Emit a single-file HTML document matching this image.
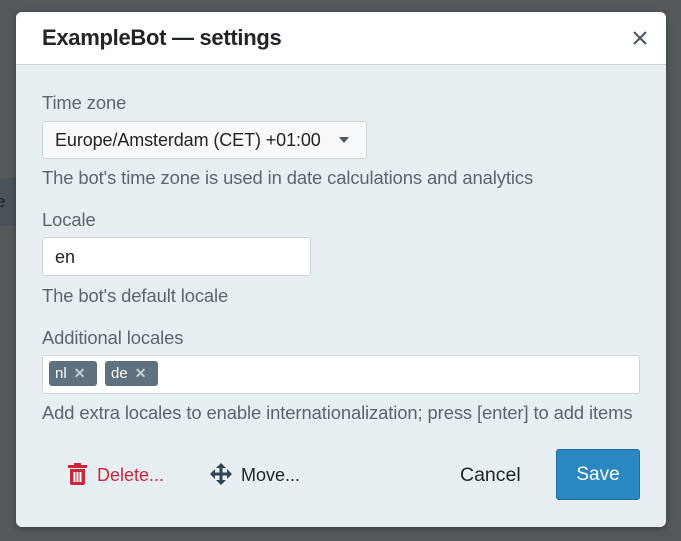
<!DOCTYPE html>
<html><head><meta charset="utf-8"><style>
*{box-sizing:border-box;margin:0;padding:0}
body{width:681px;height:541px;background:#55595c;font-family:"Liberation Sans",sans-serif;position:relative;overflow:hidden}
.strip{position:absolute;left:0;top:178px;width:30px;height:48px;background:#4a5359}
.strip span{position:absolute;left:-4px;top:14px;color:#222;font-size:17px}
.modal{position:absolute;left:16px;top:12px;width:650px;height:515px;background:#e8eff2;border-radius:6px;overflow:hidden;box-shadow:0 2px 8px rgba(0,0,0,.3)}
.hd{height:53px;background:#fff;border-bottom:1px solid #cfd6da;position:relative}
.hd h1{position:absolute;left:26px;top:13px;font-size:22px;font-weight:bold;color:#212529;letter-spacing:-0.3px}
.a{position:absolute;color:#5d656b;font-size:18.4px;white-space:nowrap;letter-spacing:-0.1px}
.box{position:absolute;background:#fff;border:1px solid #ced4d8;border-radius:3px}
.tag{position:absolute;top:5px;height:25px;background:#5f707e;color:#fff;border-radius:3px;font-size:15px;padding:4px 0 0 6px}
.tag b{color:#c5ced5;margin-left:7px;font-weight:bold;font-size:14px}
.btn{position:absolute;font-size:18px;color:#212529}
.save{position:absolute;left:540px;top:437px;width:84px;height:51px;background:#2a87c2;border:1px solid #1c6fa3;border-radius:3px;color:#fff;font-size:19px;text-align:center;line-height:49px}
</style></head><body>
<div class="strip"><span>e</span></div>
<div class="modal">
 <div class="hd"><h1>ExampleBot — settings</h1>
 <svg style="position:absolute;left:617px;top:19px" width="14" height="14" viewBox="0 0 14 14"><path d="M1 1L13 13M13 1L1 13" stroke="#4b5a66" stroke-width="2.2"/></svg></div>
 <div class="a" style="left:26px;top:80px">Time zone</div>
 <div class="box" style="left:26px;top:109px;width:325px;height:38px;background:#f8f9fa">
  <span style="position:absolute;left:12px;top:8px;font-size:18px;color:#212529;letter-spacing:-0.1px">Europe/Amsterdam (CET) +01:00</span>
  <span style="position:absolute;left:296px;top:15px;width:0;height:0;border-left:5px solid transparent;border-right:5px solid transparent;border-top:6px solid #4b5a66"></span>
 </div>
 <div class="a" style="left:26px;top:155px">The bot's time zone is used in date calculations and analytics</div>
 <div class="a" style="left:26px;top:197px">Locale</div>
 <div class="box" style="left:26px;top:225px;width:269px;height:39px"><span style="position:absolute;left:12px;top:9px;font-size:18px;color:#212529">en</span></div>
 <div class="a" style="left:26px;top:273px">The bot's default locale</div>
 <div class="a" style="left:26px;top:315px">Additional locales</div>
 <div class="box" style="left:26px;top:343px;width:598px;height:39px">
  <div class="tag" style="left:6px;width:48px">nl<b>✕</b></div>
  <div class="tag" style="left:62px;width:53px">de<b>✕</b></div>
 </div>
 <div class="a" style="left:26px;top:390px">Add extra locales to enable internationalization; press [enter] to add items</div>
 <svg style="position:absolute;left:52px;top:451px" width="19" height="22" viewBox="0 0 19 22"><rect x="0" y="2" width="19" height="3" fill="#c8283a"/><rect x="6" y="0" width="7" height="3" fill="#c8283a"/><path d="M2 6h15v14a2 2 0 0 1-2 2H4a2 2 0 0 1-2-2z" fill="#c8283a"/><rect x="5.5" y="9" width="2" height="10" fill="#fff"/><rect x="8.5" y="9" width="2" height="10" fill="#fff"/><rect x="11.5" y="9" width="2" height="10" fill="#fff"/></svg>
 <div class="btn" style="left:81px;top:453px;color:#c8283a">Delete...</div>
 <svg style="position:absolute;left:194px;top:451px" width="22" height="22" viewBox="0 0 22 22" fill="#334452"><path d="M11 0l5 5h-3.5v4.5H17V6l5 5-5 5v-3.5h-4.5V17H16l-5 5-5-5h3.5v-4.5H5V16l-5-5 5-5v3.5h4.5V5H6z"/></svg>
 <div class="btn" style="left:225px;top:453px">Move...</div>
 <div class="btn" style="left:444px;top:452px;font-size:19.5px">Cancel</div>
 <div class="save">Save</div>
</div>
</body></html>
